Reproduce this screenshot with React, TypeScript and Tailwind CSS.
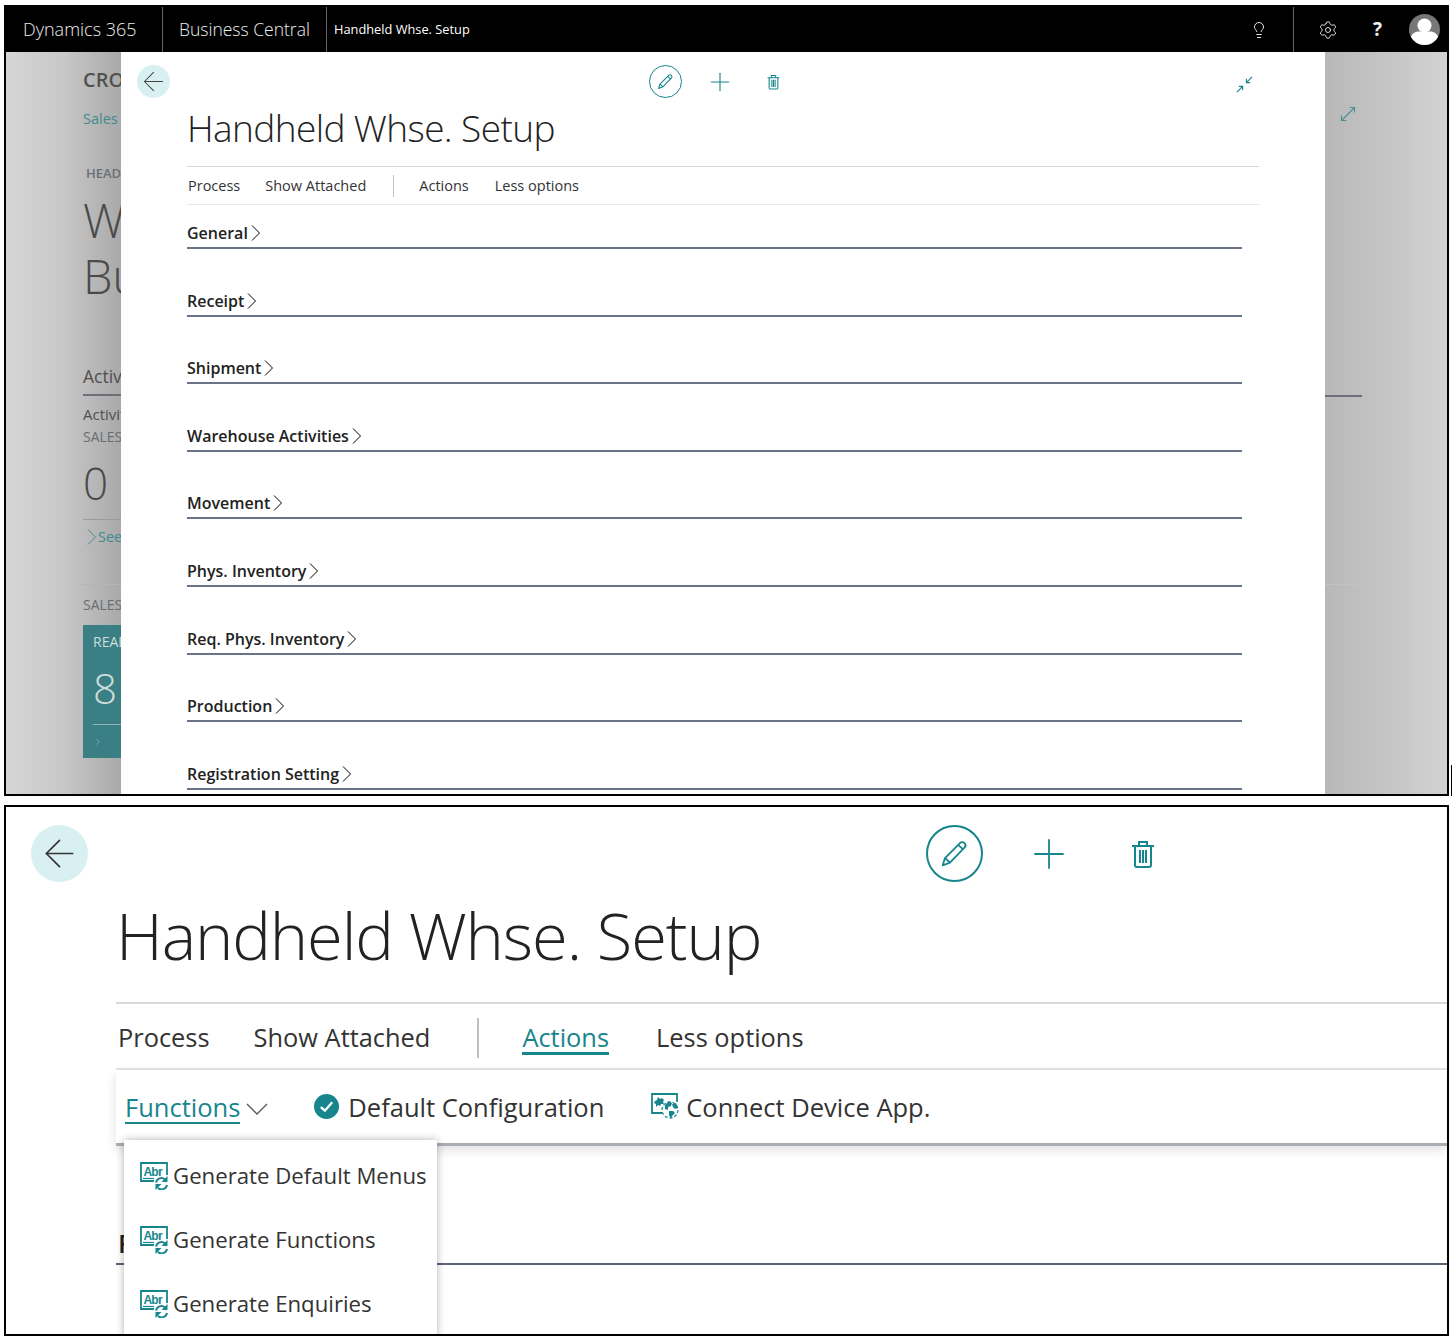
import { ChevronRight, Lightbulb, Settings, Plus, ArrowLeft } from "lucide-react";

const sections = [
  "General",
  "Receipt",
  "Shipment",
  "Warehouse Activities",
  "Movement",
  "Phys. Inventory",
  "Req. Phys. Inventory",
  "Production",
  "Registration Setting",
];

const menuItems = ["Generate Default Menus", "Generate Functions", "Generate Enquiries"];

const font = "font-['Open_Sans','Noto_Sans',sans-serif]";

function Pencil({ className }: { className?: string }) {
  return (
    <svg viewBox="0 0 32 32" fill="none" stroke="currentColor" strokeWidth="2" strokeLinejoin="round" className={className}>
      <path d="M3 29l2.500-8L22 4.500c1.400-1.400 3.600-1.400 5 0s1.400 3.600 0 5L11 26z" />
      <path d="M5.500 21l5.500 5M20 6.500l5.500 5" />
    </svg>
  );
}

function Trash({ className }: { className?: string }) {
  return (
    <svg viewBox="0 0 24 28" fill="none" stroke="currentColor" strokeWidth="2" className={className}>
      <path d="M1 6h22M8 6V2h8v4M4 6v19c0 1 .6 2 2 2h12c1.400 0 2-1 2-2V6" />
      <path d="M9 10v13M12 10v13M15 10v13" />
    </svg>
  );
}

function Collapse({ className }: { className?: string }) {
  return (
    <svg viewBox="0 0 18 18" fill="none" stroke="currentColor" strokeWidth="1.200" className={className}>
      <path d="M17 1l-6 6M11 3v4h4M1 17l6-6M3 11h4v4" />
    </svg>
  );
}

function Expand({ className }: { className?: string }) {
  return (
    <svg viewBox="0 0 16 16" fill="none" stroke="currentColor" strokeWidth="1.100" className={className}>
      <path d="M1.500 14.500l13-13M9.500 1.500h5v5M1.500 9.500v5h5" />
    </svg>
  );
}

// thin tall chevron used on the section headers
function Chevron({ className }: { className?: string }) {
  return (
    <svg viewBox="0 0 9 16" fill="none" stroke="currentColor" strokeWidth="1" className={className}>
      <path d="M1 .5L8.500 8 1 15.500" />
    </svg>
  );
}

function Avatar() {
  return (
    <svg viewBox="0 0 31 31" className="h-[31px] w-[31px]">
      <circle cx="15.500" cy="15.500" r="15.500" fill="#777" />
      <circle cx="15.500" cy="11.500" r="7" fill="#fff" />
      <path d="M2 23c1-4 5-5.500 8-5.500h11c3 0 7 1.500 8 5.500a15.500 15.500 0 0 1-27 0z" fill="#fff" />
    </svg>
  );
}

// generate icon: box with Abc and a small refresh mark
function GenerateIcon() {
  return (
    <svg viewBox="0 0 28 28" className="h-[28px] w-[28px] shrink-0">
      <path d="M14 19H1V1h26v12" fill="none" stroke="#17858c" strokeWidth="1.800" />
      <path d="M3 16.500h11" stroke="#17858c" strokeWidth="1.200" />
      <text x="3.500" y="14" fontSize="12" fontWeight="700" fill="#17858c" fontFamily="Liberation Sans" letterSpacing="-0.8">Abr</text>
      <path d="M16 20.500a5.500 5.500 0 0 1 9-3M27 23a5.500 5.500 0 0 1-9 3" fill="none" stroke="#17858c" strokeWidth="2" />
      <path d="M27.500 14v6h-6zM15.500 28v-6h6z" fill="#17858c" />
    </svg>
  );
}

function ConnectIcon() {
  return (
    <svg viewBox="0 0 28 27" className="h-[27px] w-[28px] shrink-0">
      <path d="M11 20H1V1h25v8" fill="none" stroke="#17858c" strokeWidth="1.800" />
      <path d="M4 8l2-1 1-3 2 2 2-1 2 2-1 2 1 2-3 0-1 2-2-1-2 2 0-3-2-1z" fill="#17858c" />
      <circle cx="19" cy="17" r="8" fill="none" stroke="#17858c" strokeWidth="1.200" strokeDasharray="3 2" />
      <path d="M14 12l4-4 3 2-1 3-3 1 0 3-3-1zM21 11l4-1 2 5-3 1-2-2zM18 18l4 0 2 2-3 3-1 3-2-4z" fill="#17858c" />
    </svg>
  );
}

function BackdropLeft() {
  return (
    <div className="w-[115px] shrink-0 overflow-hidden bg-gradient-to-r from-[#d6d6d6] via-[#c8c8c8] to-[#a9a9a9] pl-[77px] whitespace-nowrap">
      <div className="mt-[16px] flex h-[24px] items-center text-[20px] font-semibold text-[#505050]">CROSS</div>
      <div className="mt-[16px] flex h-[22px] items-center text-[14.500px] text-[#3f8a8e]">Sales</div>
      <div className="ml-[3px] mt-[35px] flex h-[18px] items-center text-[13px] font-semibold text-[#6b6f76]">HEAD</div>
      <div className="mt-[9px] flex h-[56px] items-center text-[47px] font-light text-[#4a4a4a]">We</div>
      <div className="flex h-[56px] items-center text-[47px] font-light text-[#4a4a4a]">Bu</div>
      <div className="mt-[60px] flex h-[24px] items-center text-[17.500px] text-[#4f4f4f]">Activ</div>
      <div className="mt-[6px] h-[2px] bg-[#6d7079]" />
      <div className="mt-[9px] flex h-[18px] items-center text-[15px] text-[#4f4f4f]">Activit</div>
      <div className="mt-[4px] flex h-[18px] items-center text-[14px] text-[#6a6d72]">SALES</div>
      <div className="mt-[9px] flex h-[58px] items-center text-[44px] font-light text-[#4a4a4a]">0</div>
      <div className="mt-[7px] h-px bg-[#9b9b9b]" />
      <div className="mt-[7px] flex h-[20px] items-center text-[14.500px] text-[#3f8a8e]">
        <Chevron className="ml-[4px] mr-[2px] h-[16px] w-[9px] shrink-0" />
        See
      </div>
      <div className="mt-[37px] h-px bg-[#b5b5b5]" />
      <div className="mt-[10px] flex h-[18px] items-center text-[14px] text-[#6a6d72]">SALES</div>
      <div className="mt-[12px] h-[133px] bg-[#3a7f83] pl-[10px] text-[#cfdcdc]">
        <div className="flex h-[32px] items-center text-[14px]">READ</div>
        <div className="flex h-[61px] items-center text-[42px] font-light">8</div>
        <div className="mt-[6px] h-px bg-[#8fb5b6]" />
        <ChevronRight className="mt-[9px] h-[16px] w-[10px]" strokeWidth={1} />
      </div>
    </div>
  );
}

function BackdropRight() {
  return (
    <div className="flex-1 bg-gradient-to-r from-[#b8b8b8] to-[#d2d2d2]">
      <div className="ml-[15px] mt-[54px] text-[#4c8d90]">
        <Expand className="h-[16px] w-[16px]" />
      </div>
      <div className="mr-[85px] mt-[273px] h-[2px] bg-[#6d7079]" />
      <div className="mr-[85px] mt-[187px] h-px bg-[#c2c2c2]" />
    </div>
  );
}

function Modal() {
  return (
    <div className="w-[1204px] shrink-0 overflow-hidden bg-white">
      <div className="flex h-[46px] items-end">
        <button className="ml-[16px] flex h-[33px] w-[33px] items-center justify-center rounded-full bg-[#d9f0f2] text-[#444]">
          <ArrowLeft className="h-[31px] w-[31px] shrink-0" strokeWidth={0.8} />
        </button>
        <button className="ml-[479px] flex h-[33px] w-[33px] items-center justify-center rounded-full border-[1.500px] border-[#17858c] text-[#17858c]">
          <Pencil className="h-[17px] w-[17px]" />
        </button>
        <div className="ml-[28px] flex h-[33px] w-[20px] items-center justify-center text-[#17858c]">
          <Plus className="h-[30px] w-[30px] shrink-0" strokeWidth={0.9} />
        </div>
        <div className="ml-[36px] flex h-[33px] w-[14px] items-center justify-center text-[#17858c]">
          <Trash className="h-[16px] w-[13px] shrink-0" />
        </div>
        <div className="mb-[5px] ml-[456px] flex h-[27px] w-[18px] items-end text-[#17858c]">
          <Collapse className="h-[17px] w-[17px]" />
        </div>
      </div>
      <div className="ml-[66px]">
        <h1 className="flex h-[68px] items-center pb-[8px] text-[37px] font-light tracking-[-0.6px] text-[#222]">Handheld Whse. Setup</h1>
        <div className="w-[1072px] border-y border-y-[#d6d8dc] border-b-[#e8e8e8]">
          <div className="flex h-[37px] items-center text-[14.500px] text-[#333]">
            <span className="ml-px">Process</span>
            <span className="ml-[25px]">Show Attached</span>
            <span className="ml-[27px] h-[22px] w-px bg-[#c4c4c4]" />
            <span className="ml-[25px]">Actions</span>
            <span className="ml-[26px]">Less options</span>
          </div>
        </div>
        <div className="w-[1055px]">
          {sections.map((s, i) => (
            <div key={s} className={`flex items-end border-b-2 border-b-[#6a7487] pb-[3px] ${i === 0 ? "h-[44px]" : "h-[67.600px]"}`}>
              <span className="text-[16px] font-semibold leading-[22px] text-[#222]">{s}</span>
              <Chevron className="mb-[3px] ml-[3px] h-[16px] w-[9px]" />
            </div>
          ))}
        </div>
      </div>
    </div>
  );
}

function ZoomedPanel() {
  return (
    <div className="relative ml-[4px] h-[531px] w-[1445px] overflow-hidden border-2 border-black bg-white">
      <div className="flex h-[75px] items-end">
        <button className="ml-[25px] flex h-[57px] w-[57px] items-center justify-center rounded-full bg-[#d9f0f2] text-[#333]">
          <ArrowLeft className="h-[45px] w-[45px] shrink-0" strokeWidth={0.9} />
        </button>
        <button className="ml-[838px] flex h-[57px] w-[57px] items-center justify-center rounded-full border-2 border-[#17858c] text-[#17858c]">
          <Pencil className="h-[29px] w-[29px]" />
        </button>
        <div className="ml-[51px] flex h-[57px] w-[30px] items-center justify-center text-[#17858c]">
          <Plus className="h-[48px] w-[48px] shrink-0" strokeWidth={0.9} />
        </div>
        <div className="ml-[68px] flex h-[57px] w-[22px] items-center justify-center text-[#17858c]">
          <Trash className="h-[30px] w-[24px] shrink-0" />
        </div>
      </div>
      <div className="ml-[110px]">
        <h2 className="flex h-[120px] items-center pb-[12px] text-[65px] font-light tracking-[-1.100px] text-[#222]">Handheld Whse. Setup</h2>
        <div className="border-y-2 border-y-[#d8d9dc] border-b-[#e4e4e4]">
          <div className="flex h-[64px] items-center pt-[3px] text-[25.400px] text-[#333]">
            <span className="ml-[2px]">Process</span>
            <span className="ml-[44px]">Show Attached</span>
            <span className="ml-[47px] h-[40px] w-[2px] bg-[#bcc0c6]" />
            <span className="ml-[43px] mt-[2px] border-b-[3px] border-[#17858c] leading-[30px] text-[#17858c]">Actions</span>
            <span className="ml-[47px]">Less options</span>
          </div>
        </div>
        <div className="flex h-[76px] items-center border-b-[3px] border-b-[#a8adb6] pt-[2px] text-[25.500px] text-[#333] shadow-[0_4px_10px_rgba(0,0,0,0.12)]">
          <span className="ml-[9px] border-b-2 border-[#17858c] leading-[30px] text-[#17858c]">Functions</span>
          <svg viewBox="0 0 22 12" fill="none" stroke="#555" strokeWidth="1.300" className="ml-[6px] mt-[3px] h-[12px] w-[22px]">
            <path d="M1 1l10 10L21 1" />
          </svg>
          <svg viewBox="0 0 24 24" className="mb-[3px] ml-[46px] h-[25px] w-[25px]">
            <circle cx="12" cy="12" r="12" fill="#17858c" />
            <path d="M6.500 12.500l4 3.500 7-8" fill="none" stroke="#fff" strokeWidth="2.200" />
          </svg>
          <span className="ml-[9px]">Default Configuration</span>
          <span className="mb-[3px] ml-[47px]"><ConnectIcon /></span>
          <span className="ml-[7px]">Connect Device App.</span>
        </div>
        <div className="mt-[78px] flex h-[41px] items-center border-b-2 border-b-[#5a6478] pl-[2px] text-[26px] font-semibold text-[#222]">F</div>
      </div>
      {/* Functions dropdown */}
      <div className="absolute left-[118px] top-[333px] h-[200px] w-[313px] bg-white pl-[16px] pt-[4px] text-[22.200px] text-[#333] shadow-[0_0_8px_rgba(0,0,0,0.3)]">
        {menuItems.map((m) => (
          <div key={m} className="flex h-[64px] items-center gap-[5px] whitespace-nowrap">
            <GenerateIcon />
            {m}
          </div>
        ))}
      </div>
    </div>
  );
}

export default function App() {
  return (
    <div className={`h-[1344px] w-[1453px] overflow-hidden bg-white pt-[5px] ${font}`}>
      <div className="flex h-[791px]">
        <div className="ml-[4px] flex h-[791px] w-[1445px] flex-col overflow-hidden border-2 border-black">
          <header className="flex h-[45px] shrink-0 items-stretch bg-black text-[#eee]">
            <div className="flex w-[157px] items-center border-r border-[#666] pl-[17px] text-[18px] font-light">Dynamics 365</div>
            <div className="flex w-[164px] items-center border-r border-[#666] pl-[16px] text-[17.500px] font-light">Business Central</div>
            <div className="flex flex-1 items-center pl-[7px] text-[12.800px] text-white">Handheld Whse. Setup</div>
            <div className="flex w-[42px] items-center justify-center pr-[26px]">
              <Lightbulb className="h-[18px] w-[18px] shrink-0" strokeWidth={1.300} />
            </div>
            <div className="flex w-[154px] items-center border-l border-[#666]">
              <Settings className="ml-[24px] h-[20px] w-[20px]" strokeWidth={1.100} />
              <span className="ml-[35px] w-[10px] text-[19px] font-bold">?</span>
              <span className="ml-[26px]"><Avatar /></span>
            </div>
          </header>
          <div className="flex min-h-0 flex-1">
            <BackdropLeft />
            <Modal />
            <BackdropRight />
          </div>
        </div>
        <div className="ml-[2px] mt-[760px] h-[31px] w-px bg-black" />
      </div>
      <div className="mt-[9px]">
        <ZoomedPanel />
      </div>
    </div>
  );
}
